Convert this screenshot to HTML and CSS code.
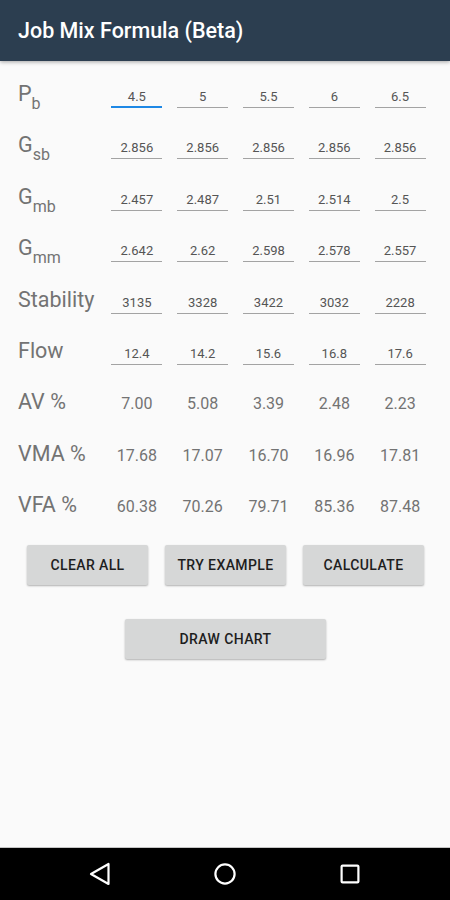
FILE: index.html
```html
<!DOCTYPE html>
<html>
<head>
<meta charset="utf-8">
<link rel="stylesheet" href="styles.css">
</head>
<body>
<div class="screen">
  <header class="appbar"><h1 class="title">Job Mix Formula (Beta)</h1></header>
  <main class="content">
    <div class="table">
      <div class="label">P<span class="sub">b</span></div>
      <div class="cell"><input class="field focused" type="text" value="4.5"></div>
      <div class="cell"><input class="field" type="text" value="5"></div>
      <div class="cell"><input class="field" type="text" value="5.5"></div>
      <div class="cell"><input class="field" type="text" value="6"></div>
      <div class="cell"><input class="field" type="text" value="6.5"></div>

      <div class="label">G<span class="sub">sb</span></div>
      <div class="cell"><input class="field" type="text" value="2.856"></div>
      <div class="cell"><input class="field" type="text" value="2.856"></div>
      <div class="cell"><input class="field" type="text" value="2.856"></div>
      <div class="cell"><input class="field" type="text" value="2.856"></div>
      <div class="cell"><input class="field" type="text" value="2.856"></div>

      <div class="label">G<span class="sub">mb</span></div>
      <div class="cell"><input class="field" type="text" value="2.457"></div>
      <div class="cell"><input class="field" type="text" value="2.487"></div>
      <div class="cell"><input class="field" type="text" value="2.51"></div>
      <div class="cell"><input class="field" type="text" value="2.514"></div>
      <div class="cell"><input class="field" type="text" value="2.5"></div>

      <div class="label">G<span class="sub">mm</span></div>
      <div class="cell"><input class="field" type="text" value="2.642"></div>
      <div class="cell"><input class="field" type="text" value="2.62"></div>
      <div class="cell"><input class="field" type="text" value="2.598"></div>
      <div class="cell"><input class="field" type="text" value="2.578"></div>
      <div class="cell"><input class="field" type="text" value="2.557"></div>

      <div class="label">Stability</div>
      <div class="cell"><input class="field" type="text" value="3135"></div>
      <div class="cell"><input class="field" type="text" value="3328"></div>
      <div class="cell"><input class="field" type="text" value="3422"></div>
      <div class="cell"><input class="field" type="text" value="3032"></div>
      <div class="cell"><input class="field" type="text" value="2228"></div>

      <div class="label">Flow</div>
      <div class="cell"><input class="field" type="text" value="12.4"></div>
      <div class="cell"><input class="field" type="text" value="14.2"></div>
      <div class="cell"><input class="field" type="text" value="15.6"></div>
      <div class="cell"><input class="field" type="text" value="16.8"></div>
      <div class="cell"><input class="field" type="text" value="17.6"></div>

      <div class="label">AV %</div>
      <div class="cell value">7.00</div>
      <div class="cell value">5.08</div>
      <div class="cell value">3.39</div>
      <div class="cell value">2.48</div>
      <div class="cell value">2.23</div>

      <div class="label">VMA %</div>
      <div class="cell value">17.68</div>
      <div class="cell value">17.07</div>
      <div class="cell value">16.70</div>
      <div class="cell value">16.96</div>
      <div class="cell value">17.81</div>

      <div class="label">VFA %</div>
      <div class="cell value">60.38</div>
      <div class="cell value">70.26</div>
      <div class="cell value">79.71</div>
      <div class="cell value">85.36</div>
      <div class="cell value">87.48</div>
    </div>

    <div class="actions">
      <button class="btn">CLEAR ALL</button>
      <button class="btn">TRY EXAMPLE</button>
      <button class="btn">CALCULATE</button>
    </div>
    <div class="actions single">
      <button class="btn wide">DRAW CHART</button>
    </div>
  </main>
  <nav class="navbar">
    <svg class="nav-icon" width="24" height="24" viewBox="0 0 24 24"><path d="M3 12 L20.5 2 L20.5 22 Z" fill="none" stroke="#fff" stroke-width="2.2" stroke-linejoin="round"/></svg>
    <svg class="nav-icon" width="24" height="24" viewBox="0 0 24 24"><circle cx="12" cy="12" r="9.6" fill="none" stroke="#fff" stroke-width="2.2"/></svg>
    <svg class="nav-icon" width="24" height="24" viewBox="0 0 24 24"><rect x="3.6" y="3.6" width="16.8" height="16.8" rx="1" fill="none" stroke="#fff" stroke-width="2.2"/></svg>
  </nav>
</div>
</body>
</html>
```

FILE: styles.css
```css
* { box-sizing: border-box; }
html, body { margin: 0; padding: 0; }
body {
  font-family: Roboto, "Liberation Sans", Arial, sans-serif;
  background: #fafafa;
}
.screen {
  width: 450px;
  height: 900px;
  display: flex;
  flex-direction: column;
  background: #fafafa;
}
.appbar {
  height: 61px;
  background: #2c3e50;
  display: flex;
  align-items: center;
  padding-left: 18px;
  box-shadow: 0 1px 4px rgba(0,0,0,0.35);
  position: relative;
  z-index: 1;
  flex: none;
}
.title {
  margin: 0;
  color: #fff;
  font-size: 21.5px;
  font-weight: 500;
  letter-spacing: 0;
}
.content {
  flex: 1;
  padding-top: 20px;
}
.table {
  display: grid;
  grid-template-columns: 86px repeat(5, 1fr);
  grid-auto-rows: 51.4px;
  align-items: baseline;
  padding: 0 17px 0 18px;
}
.label {
  font-size: 21.5px;
  line-height: 25px;
  color: #737373;
  white-space: nowrap;
}
.sub {
  font-size: 16px;
  line-height: 0;
  vertical-align: -8px;
}
.cell {
  justify-self: center;
}
.field {
  display: block;
  width: 51px;
  margin: 0;
  border: none;
  border-bottom: 1px solid #a3a3a3;
  background: transparent;
  font-family: Roboto, "Liberation Sans", Arial, sans-serif;
  font-size: 13px;
  line-height: 15px;
  height: 19px;
  padding: 0 0 3px;
  color: #555;
  text-align: center;
  outline: none;
}
.field.focused {
  border-bottom: 2px solid #1e88e5;
  padding-bottom: 2px;
}
.value {
  font-size: 16px;
  line-height: 19px;
  color: #737373;
}
.actions {
  display: flex;
  gap: 17px;
  padding: 0 26px 0 27px;
  margin-top: 1px;
}
.actions.single {
  justify-content: center;
  margin-top: 34px;
}
.btn {
  flex: 1;
  height: 40px;
  border: none;
  border-radius: 2px;
  background: #d6d7d7;
  box-shadow: 0 1px 2px rgba(0,0,0,0.3);
  font-family: Roboto, "Liberation Sans", Arial, sans-serif;
  font-size: 14px;
  font-weight: 500;
  letter-spacing: 0.4px;
  color: #1e1e1e;
  padding: 0;
}
.btn.wide {
  flex: none;
  width: 201px;
}
.navbar {
  flex: none;
  height: 53px;
  background: #000;
  border-top: 1px solid #c4c4c4;
  display: grid;
  grid-template-columns: 1fr 1fr 1fr;
  justify-items: center;
  align-items: center;
  padding: 0 38px;
}
.nav-icon { display: block; }
```
